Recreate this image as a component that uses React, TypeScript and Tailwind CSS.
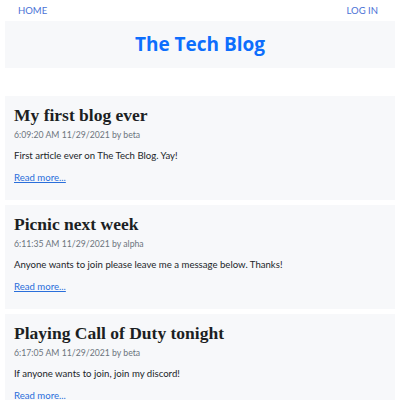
import React from "react";

const posts = [
  { title: "My first blog ever", meta: "6:09:20 AM 11/29/2021 by beta", body: "First article ever on The Tech Blog. Yay!" },
  { title: "Picnic next week", meta: "6:11:35 AM 11/29/2021 by alpha", body: "Anyone wants to join please leave me a message below. Thanks!" },
  { title: "Playing Call of Duty tonight", meta: "6:17:05 AM 11/29/2021 by beta", body: "If anyone wants to join, join my discord!" },
];

export default function App() {
  return (
    <div className="w-[400px] h-[400px] overflow-hidden bg-white" style={{ fontFamily: 'Lato, "Open Sans", sans-serif' }}>
      <nav className="flex justify-between px-[18px] h-[21px] items-center text-[9.5px] text-[#4a72d6]">
        <a className="pt-[1px]">HOME</a>
        <a className="pr-[4px] pt-[1px]">LOG IN</a>
      </nav>
      <header className="mx-[5px] h-[47px] bg-[#f7f8fa] flex items-center justify-center">
        <h1 className="text-[19px] font-bold text-[#0d6efd]" style={{ fontFamily: '"Open Sans", sans-serif' }}>The Tech Blog</h1>
      </header>
      <main className="mt-[28px] mx-[5px] flex flex-col gap-[5px]">
        {posts.map((p) => (
          <article key={p.title} className="bg-[#f7f8fa] h-[104px] px-[9px] pt-[6px]">
            <h2 className="text-[17.5px] font-bold text-[#1c1f23] leading-[26px]" style={{ fontFamily: '"Liberation Serif", serif' }}>{p.title}</h2>
            <p className="text-[8.7px] text-[#6c757d] leading-[12px] mt-[1px]">{p.meta}</p>
            <p className="text-[9.6px] text-[#212529] leading-[12px] mt-[9px]">{p.body}</p>
            <a className="block text-[9.6px] text-[#2a6fdb] underline leading-[12px] mt-[10px]">Read more...</a>
          </article>
        ))}
      </main>
    </div>
  );
}
